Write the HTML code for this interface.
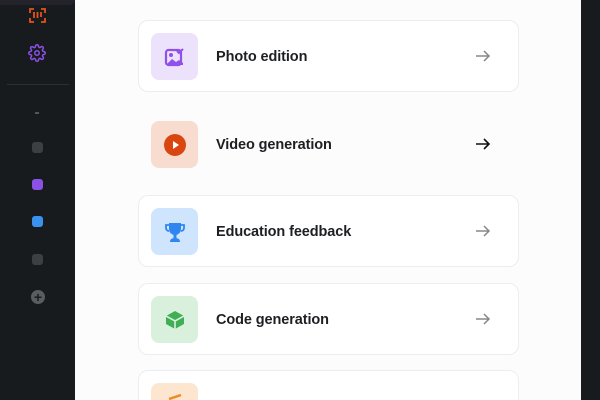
<!DOCTYPE html>
<html style="width:600px;height:400px;overflow:hidden"><head><style>
*{margin:0;padding:0;box-sizing:border-box}
body{width:600px;height:400px;overflow:hidden;background:#181b1d;font-family:"Liberation Sans",sans-serif;position:relative}
.main{position:absolute;left:75px;top:0;width:506px;height:400px;background:#fcfcfc}
.card{position:absolute;left:138px;width:381px;height:72px;border:1px solid #ebedef;border-radius:10px;background:#fff}
.card.h{border-color:transparent;background:transparent}
.ib{position:absolute;left:12px;top:12px;width:47px;height:47px;border-radius:8px;display:flex;align-items:center;justify-content:center}
.t{position:absolute;left:77px;top:28px;font-size:14.5px;font-weight:bold;color:#1d1f22;letter-spacing:-0.1px}
.ar{position:absolute;left:336px;top:25px}
.sq{position:absolute;left:32px;width:11px;height:11px;border-radius:3px}
</style></head><body>
<div style="position:absolute;left:0;top:0;width:75px;height:5px;background:#24232b;border-radius:0 0 6px 0"></div>
<svg style="position:absolute;left:29px;top:8px" width="17" height="15" viewBox="0 0 17 15" fill="none" stroke="#e4531b" stroke-width="1.8"><path d="M1 5V1h4M12 1h4v4M16 10v4h-4M5 14H1v-4M5 4v6M8.5 4v6M12 4v5"/></svg>
<svg style="position:absolute;left:28px;top:44px" width="18" height="18" viewBox="0 0 24 24" fill="none" stroke="#8b50e6" stroke-width="2"><circle cx="12" cy="12" r="3"/><path d="M19.4 15a1.7 1.7 0 0 0 .3 1.8l.1.1a2 2 0 1 1-2.8 2.8l-.1-.1a1.7 1.7 0 0 0-1.8-.3 1.7 1.7 0 0 0-1 1.5V21a2 2 0 1 1-4 0v-.1a1.7 1.7 0 0 0-1.1-1.5 1.7 1.7 0 0 0-1.8.3l-.1.1a2 2 0 1 1-2.8-2.8l.1-.1a1.7 1.7 0 0 0 .3-1.8 1.7 1.7 0 0 0-1.5-1H3a2 2 0 1 1 0-4h.1a1.7 1.7 0 0 0 1.5-1.1 1.7 1.7 0 0 0-.3-1.8l-.1-.1a2 2 0 1 1 2.8-2.8l.1.1a1.7 1.7 0 0 0 1.8.3H9a1.7 1.7 0 0 0 1-1.5V3a2 2 0 1 1 4 0v.1a1.7 1.7 0 0 0 1 1.5 1.7 1.7 0 0 0 1.8-.3l.1-.1a2 2 0 1 1 2.8 2.8l-.1.1a1.7 1.7 0 0 0-.3 1.8V9a1.7 1.7 0 0 0 1.5 1H21a2 2 0 1 1 0 4h-.1a1.7 1.7 0 0 0-1.5 1z"/></svg>
<div style="position:absolute;left:7px;top:84px;width:62px;height:1px;background:#2c3033"></div>
<div style="position:absolute;left:35px;top:112px;width:4px;height:2px;background:#555"></div>
<div class="sq" style="top:142px;background:#3d4043"></div>
<div class="sq" style="top:179px;background:#8b50e6"></div>
<div class="sq" style="top:216px;background:#3a92f0"></div>
<div class="sq" style="top:254px;background:#3d4043"></div>
<div style="position:absolute;left:31px;top:290px;width:14px;height:14px;border-radius:50%;background:#5a5d60;color:#1a1c1e;font-size:14px;line-height:14px;text-align:center;font-weight:bold">+</div>
<div class="main"></div>

<div class="card" style="top:20px"><div class="ib" style="background:#ece2fb"><svg width="22" height="22" viewBox="0 0 22 22"><rect x="2" y="4" width="15" height="15" rx="2.5" fill="none" stroke="#9150ea" stroke-width="2.2"/><circle cx="7" cy="9" r="2" fill="#9150ea"/><path d="M3 18l5-5 4 3 3-2 4 3v2H3z" fill="#9150ea"/><path d="M13 5l2 2 4-4" fill="none" stroke="#9150ea" stroke-width="2"/></svg></div><div class="t">Photo edition</div><svg class="ar" width="16" height="20" viewBox="0 0 16 20" fill="none" stroke="#888" stroke-width="1.5"><path d="M1 10h13M9 5l5 5-5 5"/></svg></div>

<div class="card h" style="top:108px"><div class="ib" style="background:#f8dcd0"><svg width="24" height="24" viewBox="0 0 24 24"><circle cx="12" cy="12" r="11" fill="#d9460f"/><path d="M10 8l6 4-6 4z" fill="#fff"/></svg></div><div class="t">Video generation</div><svg class="ar" width="16" height="20" viewBox="0 0 16 20" fill="none" stroke="#111" stroke-width="1.6"><path d="M1 10h13M9 5l5 5-5 5"/></svg></div>

<div class="card" style="top:195px"><div class="ib" style="background:#cfe4fd"><svg width="24" height="24" viewBox="0 0 24 24" fill="#2f86ee"><path d="M6 3h12v6a6 6 0 0 1-12 0z"/><path d="M6 5H3v3a3 3 0 0 0 3 3M18 5h3v3a3 3 0 0 1-3 3" fill="none" stroke="#2f86ee" stroke-width="1.8"/><rect x="10.5" y="14" width="3" height="4"/><path d="M7 22c0-3 2-4 5-4s5 1 5 4z"/></svg></div><div class="t">Education feedback</div><svg class="ar" width="16" height="20" viewBox="0 0 16 20" fill="none" stroke="#888" stroke-width="1.5"><path d="M1 10h13M9 5l5 5-5 5"/></svg></div>

<div class="card" style="top:283px"><div class="ib" style="background:#d9f0dd"><svg width="24" height="24" viewBox="0 0 24 24" fill="#3fae55"><path d="M12 3l9 5v8l-9 5-9-5V8z"/><path d="M3 8l9 5 9-5M12 13v8" fill="none" stroke="#d9f0dd" stroke-width="1.6"/></svg></div><div class="t">Code generation</div><svg class="ar" width="16" height="20" viewBox="0 0 16 20" fill="none" stroke="#888" stroke-width="1.5"><path d="M1 10h13M9 5l5 5-5 5"/></svg></div>

<div class="card" style="top:370px;height:30px;border-bottom:none;border-radius:10px 10px 0 0"><div class="ib" style="background:#fde6cf;height:17px;border-radius:8px 8px 0 0;align-items:flex-end"><svg width="24" height="8" viewBox="0 0 24 8"><path d="M6 7l12-4" stroke="#f08a1c" stroke-width="2.5"/></svg></div></div>
</body></html>
